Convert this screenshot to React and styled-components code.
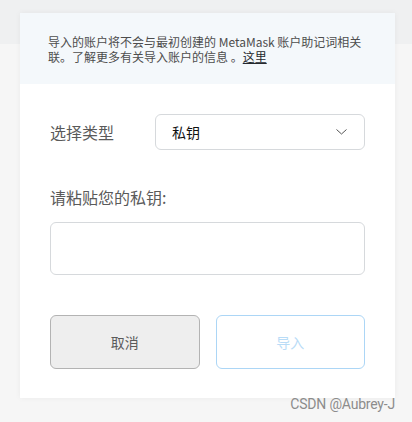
import React from 'react';
import styled, { createGlobalStyle } from 'styled-components';

const GlobalStyle = createGlobalStyle`
  html, body {
    margin: 0;
    padding: 0;
    background: #f6f6f6;
    font-family: "Noto Sans CJK SC", "Noto Sans", sans-serif;
  }
`;

const Page = styled.div`
  position: relative;
  width: 412px;
  height: 422px;
  padding-top: 13px;
  box-sizing: border-box;
  background: linear-gradient(to bottom, #eff0f1 0, #eff0f1 44px, #f6f6f6 44px);
`;

const Card = styled.div`
  margin-left: 20px;
  width: 375px;
  height: 385px;
  background: #fff;
  box-shadow: 0 0 6px rgba(0, 0, 0, 0.05);
  display: flex;
  flex-direction: column;
`;

const Notice = styled.div`
  background: #f4f8fb;
  padding: 21px 30px 20px 28px;
  font-size: 12px;
  line-height: 15px;
  color: #4d4d4d;
`;

const HereLink = styled.a`
  color: #24292e;
  text-decoration: underline;
  cursor: pointer;
`;

const Form = styled.div`
  padding: 30px 30px 29px;
  display: flex;
  flex-direction: column;
`;

const Row = styled.div`
  display: flex;
  align-items: center;
`;

const Label = styled.div`
  font-size: 16px;
  line-height: 24px;
  color: #5a5a5a;
  width: ${(p) => p.$width || 'auto'};
  flex-shrink: 0;
  margin-top: ${(p) => p.$top || '0'};
`;

const Select = styled.div`
  flex: 1;
  height: 36px;
  box-sizing: border-box;
  border: 1px solid #d6d9dc;
  border-radius: 6px;
  display: flex;
  align-items: center;
  justify-content: space-between;
  padding: 0 17px 0 16px;
  font-size: 14px;
  color: #111;
`;

const TextArea = styled.textarea`
  margin-top: 13px;
  height: 53px;
  box-sizing: border-box;
  border: 1px solid #d6d9dc;
  border-radius: 6px;
  resize: none;
  outline: none;
  font-family: inherit;
`;

const Buttons = styled.div`
  margin-top: 40px;
  display: flex;
  gap: 16px;
`;

const Button = styled.button`
  flex: 1;
  height: 54px;
  border-radius: 6px;
  font-family: inherit;
  font-size: 14px;
  background: ${(p) => (p.$primary ? '#fff' : '#eeeeee')};
  border: 1px solid ${(p) => (p.$primary ? '#acd6f6' : '#b3b3b3')};
  color: ${(p) => (p.$primary ? '#b9dcf7' : '#5b5b5b')};
`;

const Watermark = styled.div`
  position: absolute;
  right: 17px;
  top: 396px;
  font-family: Roboto, "Liberation Sans", sans-serif;
  font-size: 14px;
  letter-spacing: -0.2px;
  color: #8c8c8c;
`;

export default function App() {
  return (
    <>
      <GlobalStyle />
      <Page>
        <Card>
          <Notice>
            导入的账户将不会与最初创建的 MetaMask 账户助记词相关联。了解更多有关导入账户的信息 。<HereLink>这里</HereLink>
          </Notice>
          <Form>
            <Row>
              <Label $width="105px">选择类型</Label>
              <Select>
                <span>私钥</span>
                <svg width="11" height="6" viewBox="0 0 11 6" fill="none">
                  <path d="M0.5 0.5L5.5 5L10.5 0.5" stroke="#555" strokeWidth="1" />
                </svg>
              </Select>
            </Row>
            <Label $top="35px">请粘贴您的私钥:</Label>
            <TextArea />
            <Buttons>
              <Button>取消</Button>
              <Button $primary>导入</Button>
            </Buttons>
          </Form>
        </Card>
        <Watermark>CSDN @Aubrey-J</Watermark>
      </Page>
    </>
  );
}
